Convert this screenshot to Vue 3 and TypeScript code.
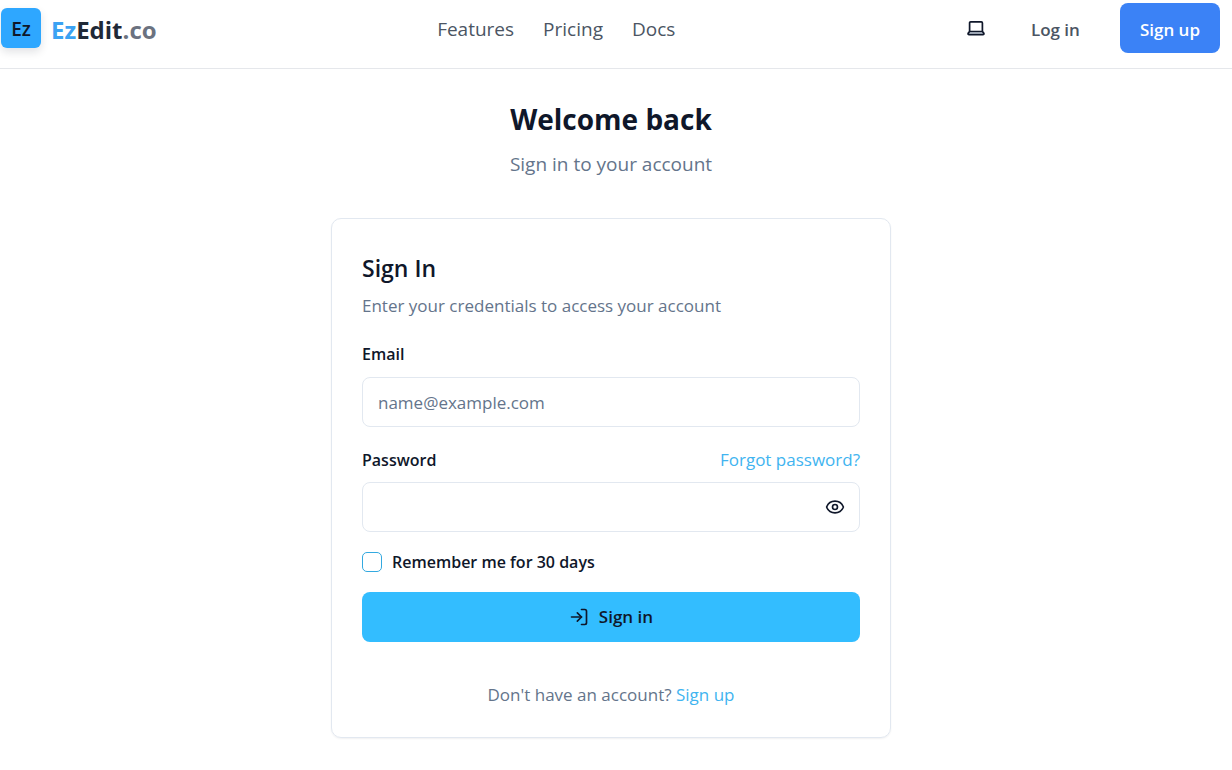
<script setup lang="ts">
import { ref } from 'vue'

interface NavLink {
  label: string
  href: string
}

const links: NavLink[] = [
  { label: 'Features', href: '#features' },
  { label: 'Pricing', href: '#pricing' },
  { label: 'Docs', href: '#docs' },
]

const email = ref('')
const password = ref('')
const remember = ref(false)
const showPassword = ref(false)
</script>

<template>
  <div class="page">
    <header class="header">
      <a class="brand" href="#home">
        <span class="logo">Ez</span>
        <span class="wordmark"><span class="ez">Ez</span>Edit<span class="co">.co</span></span>
      </a>
      <nav class="nav" aria-label="Main">
        <a v-for="link in links" :key="link.label" :href="link.href">{{ link.label }}</a>
      </nav>
      <div class="actions">
        <button class="icon-button theme" type="button" aria-label="Toggle theme">
          <svg viewBox="0 0 20 20" width="20" height="20" fill="none" stroke="currentColor" stroke-width="1.7" stroke-linejoin="round">
            <path d="M3.6 13.5V4.9C3.6 4.2 4 3.8 4.7 3.8H15.3C16 3.8 16.4 4.2 16.4 4.9V13.5" />
            <path d="M3.6 13.5H16.4L17.9 15.4C18.1 16.2 17.7 16.6 17 16.6H3C2.3 16.6 1.9 16.2 2.1 15.4Z" fill="#cbd5e1" />
          </svg>
        </button>
        <a class="login" href="#login">Log in</a>
        <a class="signup" href="#signup">Sign up</a>
      </div>
    </header>

    <main class="main">
      <div class="intro">
        <h1>Welcome back</h1>
        <p>Sign in to your account</p>
      </div>

      <section class="card">
        <h2>Sign In</h2>
        <p class="hint">Enter your credentials to access your account</p>

        <form @submit.prevent>
          <div class="row">
            <label for="email">Email</label>
          </div>
          <input id="email" v-model="email" class="field" type="email" placeholder="name@example.com" />

          <div class="row spaced">
            <label for="password">Password</label>
            <a class="link" href="#forgot">Forgot password?</a>
          </div>
          <div class="password">
            <input id="password" v-model="password" class="field" :type="showPassword ? 'text' : 'password'" />
            <button class="icon-button eye" type="button" aria-label="Show password" @click="showPassword = !showPassword">
              <svg viewBox="0 0 24 24" width="20" height="20" fill="none" stroke="currentColor" stroke-width="2" stroke-linecap="round" stroke-linejoin="round">
                <path d="M2.06 12.35a1 1 0 0 1 0-.7 10.75 10.75 0 0 1 19.88 0 1 1 0 0 1 0 .7 10.75 10.75 0 0 1-19.88 0" />
                <circle cx="12" cy="12" r="3" />
              </svg>
            </button>
          </div>

          <div class="remember">
            <input id="remember" v-model="remember" type="checkbox" />
            <label for="remember">Remember me for 30 days</label>
          </div>

          <button class="submit" type="submit">
            <svg viewBox="0 0 24 24" width="20" height="20" fill="none" stroke="currentColor" stroke-width="2" stroke-linecap="round" stroke-linejoin="round">
              <path d="M15 3h4a2 2 0 0 1 2 2v14a2 2 0 0 1-2 2h-4" />
              <path d="M10 17l5-5-5-5" />
              <path d="M15 12H3" />
            </svg>
            Sign in
          </button>
        </form>

        <p class="footer">Don't have an account? <a class="link" href="#signup">Sign up</a></p>
      </section>
    </main>
  </div>
</template>

<style>
body {
  margin: 0;
  background: #fff;
}
</style>

<style scoped>
.page {
  font-family: "Segoe UI", "Open Sans", "Noto Sans", sans-serif;
  font-size: 17px;
  line-height: 24px;
  color: #0f172a;
}

.page * {
  box-sizing: border-box;
}

a {
  text-decoration: none;
}

h1,
h2,
p {
  margin: 0;
}

.header {
  display: flex;
  align-items: center;
  justify-content: space-between;
  padding: 3px 12px 15px 1px;
  border-bottom: 1px solid #e5e7eb;
}

.brand {
  display: flex;
  align-items: center;
  gap: 10px;
}

.logo {
  display: flex;
  align-items: center;
  justify-content: center;
  width: 40px;
  height: 40px;
  padding-top: 2px;
  border-radius: 6px;
  background: #2ea7ff;
  color: #0f172a;
  font-size: 19px;
  font-weight: 600;
  box-shadow: 0 4px 8px rgba(15, 23, 42, 0.12);
}

.wordmark {
  padding-top: 4px;
  font-size: 24px;
  line-height: 32px;
  font-weight: 700;
  color: #1f2937;
}

.ez {
  color: #3ba2f3;
}

.co {
  color: #6b7280;
}

.nav {
  display: flex;
  gap: 29px;
  padding-top: 2px;
  font-size: 19px;
}

.nav a {
  color: #4b5563;
}

.actions {
  display: flex;
  align-items: center;
}

.icon-button {
  display: flex;
  align-items: center;
  justify-content: center;
  width: 40px;
  height: 40px;
  padding: 0;
  border: 0;
  background: transparent;
  color: #0f172a;
}

.login,
.signup {
  display: flex;
  align-items: center;
  height: 50px;
  padding: 3px 20px 0;
  font-weight: 600;
}

.login {
  margin: 0 20px 0 15px;
  color: #4b5563;
}

.signup {
  border-radius: 8px;
  background: #3b82f6;
  color: #fff;
}

.main {
  display: flex;
  flex-direction: column;
  align-items: center;
  gap: 40px;
  padding: 30px 10px 30px 0;
}

.intro {
  display: flex;
  flex-direction: column;
  gap: 11px;
  text-align: center;
}

h1 {
  font-size: 28px;
  line-height: 40px;
  font-weight: 700;
}

.intro p {
  font-size: 19px;
  line-height: 28px;
  color: #64748b;
}

.card {
  width: 100%;
  max-width: 560px;
  padding: 30px;
  border: 1px solid #e2e8f0;
  border-radius: 10px;
  box-shadow: 0 1px 2px rgba(15, 23, 42, 0.06);
}

h2 {
  padding-top: 3px;
  font-size: 23px;
  line-height: 32px;
  font-weight: 600;
}

.hint {
  margin-top: 10px;
  color: #64748b;
}

.row {
  display: flex;
  align-items: center;
  justify-content: space-between;
  margin: 24px 0 11px;
}

.row.spaced {
  margin: 21px 0 10px;
}

label {
  font-size: 16px;
  font-weight: 600;
}

.link {
  color: #41b4f0;
}

.field {
  display: block;
  width: 100%;
  height: 50px;
  padding: 1px 15px 0;
  border: 1px solid #e2e8f0;
  border-radius: 8px;
  background: #fff;
  color: inherit;
  font: inherit;
}

.field::placeholder {
  color: #64748b;
  opacity: 1;
}

.password {
  position: relative;
}

.eye {
  position: absolute;
  top: 5px;
  right: 5px;
}

.remember {
  display: flex;
  align-items: center;
  gap: 10px;
  margin: 18px 0;
}

.remember input {
  appearance: none;
  width: 20px;
  height: 20px;
  margin: 0;
  border: 1px solid #33a9e0;
  border-radius: 5px;
  background: #fff;
}

.remember input:checked {
  background: #33bdff;
}

.submit {
  display: flex;
  align-items: center;
  justify-content: center;
  gap: 10px;
  width: 100%;
  height: 50px;
  padding: 0;
  border: 0;
  border-radius: 8px;
  background: #33bdff;
  color: #0f172a;
  font: inherit;
  font-weight: 600;
}

.footer {
  margin-top: 41px;
  text-align: center;
  color: #64748b;
}
</style>
